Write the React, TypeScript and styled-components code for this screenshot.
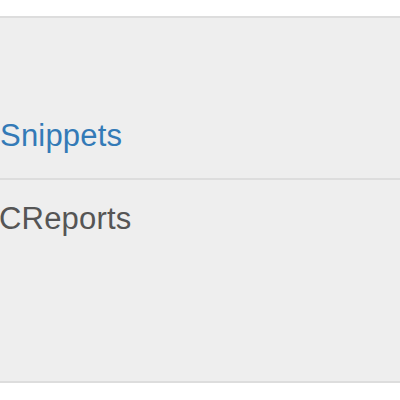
import styled, { createGlobalStyle } from 'styled-components';

const GlobalStyle = createGlobalStyle`
	html, body {
		margin: 0;
		padding: 0;
		background: #ffffff;
		font-family: 'Liberation Sans', Arial, sans-serif;
	}
`;

interface IItem {
	label: string;
	isLink?: boolean;
	align: 'top' | 'bottom';
	height: number;
	offset: number;
}

const items: IItem[] = [
	{ label: 'Snippets', isLink: true, align: 'bottom', height: 162, offset: 0 },
	{ label: 'CReports', align: 'top', height: 203, offset: -1 },
];

const App = () => {
	return (
		<>
			<GlobalStyle />
			<Page>
				<List>
					{items.map((item) => (
						<Row key={item.label} $align={item.align} $height={item.height}>
							<Label $isLink={item.isLink} $offset={item.offset}>
								{item.label}
							</Label>
						</Row>
					))}
				</List>
			</Page>
		</>
	);
};

export default App;

const Page = styled.div`
	width: 400px;
	height: 400px;
	overflow: hidden;
	padding-top: 16px;
	box-sizing: border-box;
`;

const List = styled.div`
	display: flex;
	flex-direction: column;
	border-top: 2px solid #dddddd;
	background-color: #eeeeee;
`;

const Row = styled.div<{ $align: 'top' | 'bottom'; $height: number }>`
	display: flex;
	flex-direction: column;
	justify-content: ${({ $align }) => ($align === 'top' ? 'flex-start' : 'flex-end')};
	height: ${({ $height }) => $height}px;
	padding: ${({ $align }) => ($align === 'top' ? '22px 0 0' : '0 0 25px')};
	box-sizing: border-box;
	border-bottom: 2px solid #dddddd;
	overflow: hidden;
`;

const Label = styled.span<{ $isLink?: boolean; $offset: number }>`
	display: block;
	font-size: 31px;
	line-height: 34px;
	letter-spacing: 0.2px;
	margin-left: ${({ $offset }) => $offset}px;
	color: ${({ $isLink }) => ($isLink ? '#337ab7' : '#555555')};
	white-space: nowrap;
`;
